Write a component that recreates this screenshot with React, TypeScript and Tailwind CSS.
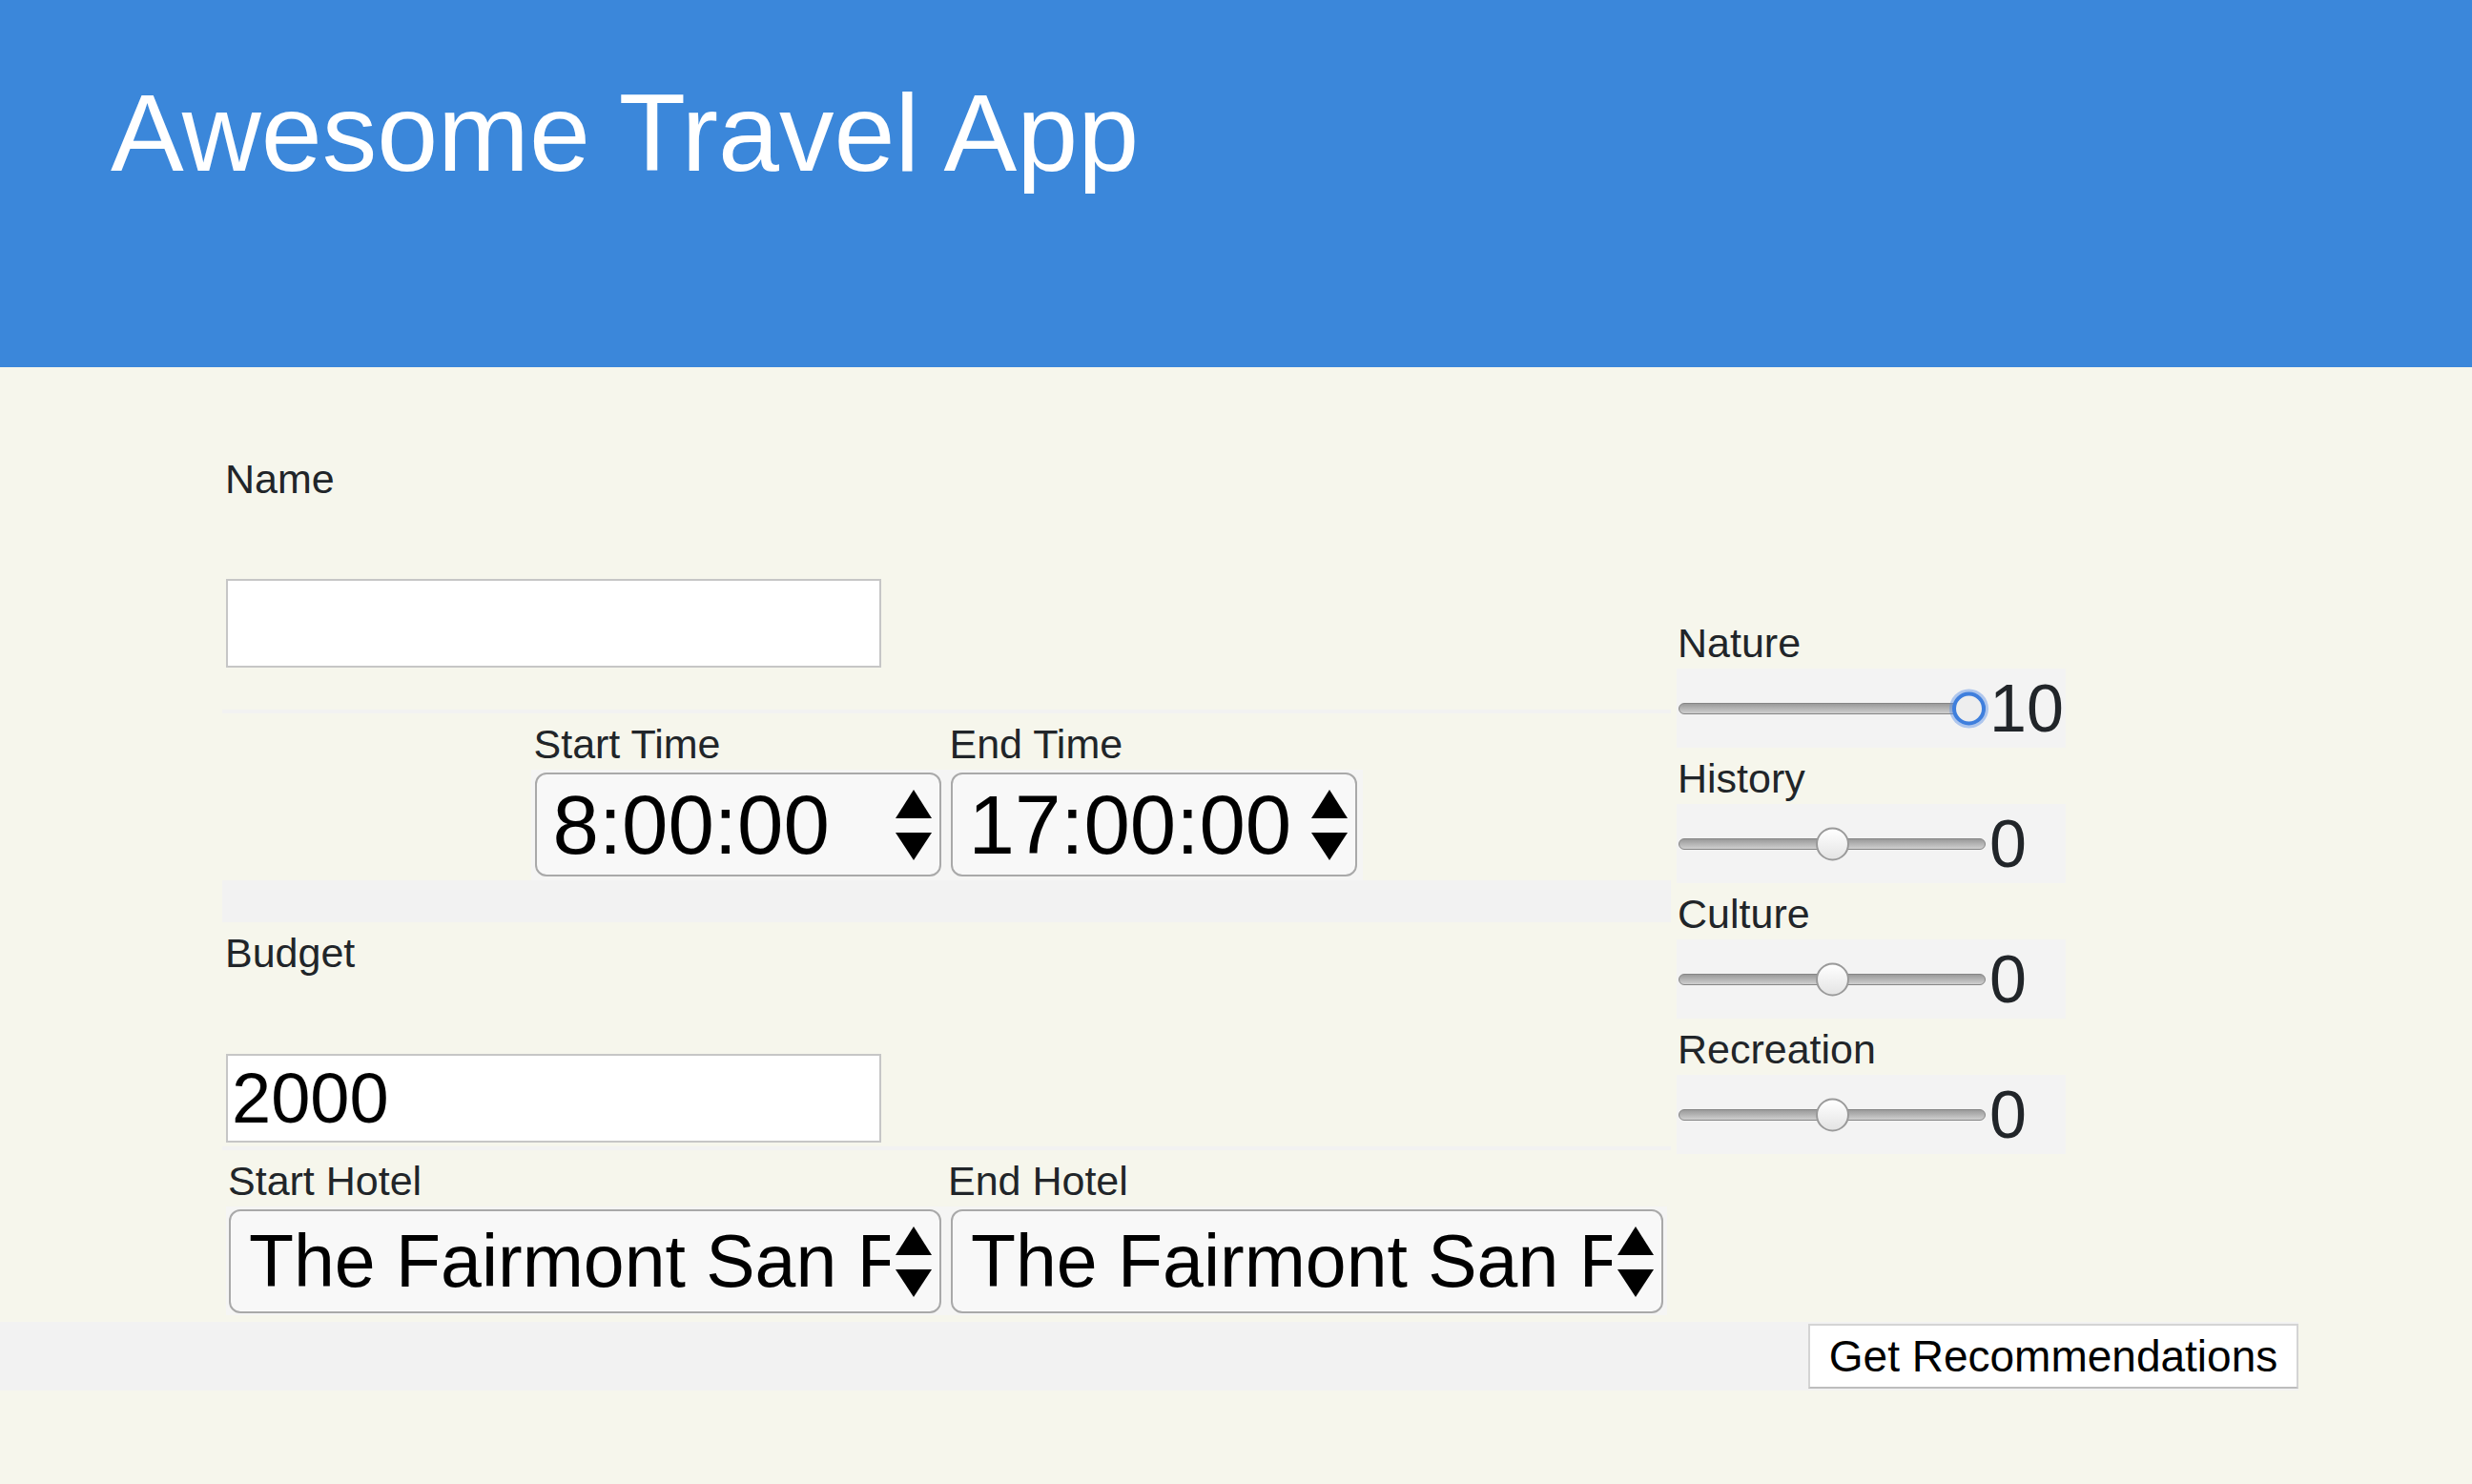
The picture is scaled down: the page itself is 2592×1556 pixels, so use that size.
import React from 'react';

type Slider = {
  label: string;
  value: number;
  focused?: boolean;
};

const sliders: Slider[] = [
  { label: 'Nature', value: 10, focused: true },
  { label: 'History', value: 0 },
  { label: 'Culture', value: 0 },
  { label: 'Recreation', value: 0 },
];

// slider range is -10..10, track 322px, thumb 35px
const thumbLeft = (value: number) => ((value + 10) / 20) * (322 - 35);

const SpinArrows = () => (
  <svg width="38" height="74" viewBox="0 0 38 74" aria-hidden="true" className="shrink-0">
    <polygon points="19,0 38,30 0,30" fill="#000" />
    <polygon points="0,45 38,45 19,74" fill="#000" />
  </svg>
);

const Label = ({ children, className = '' }: { children: React.ReactNode; className?: string }) => (
  <div className={`pt-[5px] text-[43px] leading-[54px] text-[#212529] ${className}`}>{children}</div>
);

const TimeBox = ({ value }: { value: string }) => (
  <div className="flex h-[109px] w-[426px] items-center rounded-[12px] border-2 border-[#a9a9a9] bg-[#f8f8f8] pl-[17px] pr-[8px]">
    <span className="flex-1 text-[87px] leading-none text-black">{value}</span>
    <SpinArrows />
  </div>
);

const HotelSelect = ({ value }: { value: string }) => (
  <div className="flex h-[109px] w-[747px] items-center rounded-[12px] border-2 border-[#a9a9a9] bg-[#f8f8f8] pl-[19px] pr-[8px]">
    <span className="w-[672px] overflow-hidden whitespace-nowrap text-[77px] leading-none text-black">
      {value}
    </span>
    <span className="ml-[6px] flex">
      <SpinArrows />
    </span>
  </div>
);

const SliderRow = ({ slider }: { slider: Slider }) => (
  <div>
    <Label className="pl-[1px]">{slider.label}</Label>
    <div className="flex h-[83px] items-center bg-[#f3f3f3] pl-[2px]">
      <div className="relative flex h-[46px] w-[322px] items-center">
        <div className="h-[12px] w-full rounded-full border border-[#858585] bg-linear-to-b from-[#9a9a9a] to-[#d0d0d0]" />
        {slider.focused ? (
          <div
            className="absolute top-1/2 h-[35px] w-[35px] -translate-y-1/2 rounded-full border-[4px] border-[#3f7fdd] bg-[#eeeeee] shadow-[0_0_0_3px_rgba(90,145,230,0.45)]"
            style={{ left: thumbLeft(slider.value) }}
          />
        ) : (
          <div
            className="absolute top-1/2 h-[35px] w-[35px] -translate-y-1/2 rounded-full border-2 border-[#9a9a9a] bg-linear-to-b from-white to-[#e4e4e4]"
            style={{ left: thumbLeft(slider.value) }}
          />
        )}
      </div>
      <span className="ml-[4px] text-[70px] leading-none text-[#212529]">{slider.value}</span>
    </div>
  </div>
);

export default function App() {
  return (
    <div className="min-h-screen bg-[#f6f6ec] font-['Liberation_Sans',Arial,sans-serif]">
      {/* ヘッダー */}
      <header className="h-[385px] bg-[#3b87da] pl-[116px] pt-[82px]">
        <h1 className="text-[115px] leading-none text-white">Awesome Travel App</h1>
      </header>

      <main className="flex items-start gap-[6px] pl-[233px] pt-[85px]">
        {/* フォーム */}
        <div className="w-[1519px]">
          <Label className="pl-[3px]">Name</Label>
          <input
            type="text"
            readOnly
            className="ml-[4px] mt-[78px] block h-[93px] w-[687px] border-2 border-[#c6c6c6] bg-white outline-none"
          />
          <div className="mt-[44px] h-[4px] bg-[#f2f2f2]" />

          <div className="mx-auto w-[872px]">
            <div className="flex">
              <Label className="w-[436px] pl-[3px]">Start Time</Label>
              <Label className="pl-[3px]">End Time</Label>
            </div>
            <div className="flex gap-[10px] bg-[#f5f5f4] pb-[4px] pl-[4px] pr-[6px] pt-[3px]">
              <TimeBox value="8:00:00" />
              <TimeBox value="17:00:00" />
            </div>
          </div>
          <div className="h-[44px] bg-[#f2f2f2]" />

          <Label className="pl-[3px]">Budget</Label>
          <input
            type="text"
            readOnly
            value="2000"
            className="ml-[4px] mt-[79px] block h-[93px] w-[687px] border-2 border-[#c6c6c6] bg-white pl-[4px] text-[74px] leading-none text-black outline-none"
          />
          <div className="mt-[4px] h-[4px] bg-[#f2f2f2]" />

          <div className="mx-auto w-[1511px]">
            <div className="flex">
              <Label className="w-[757px] pl-[2px]">Start Hotel</Label>
              <Label>End Hotel</Label>
            </div>
            <div className="flex gap-[10px] bg-[#f5f5f4] pb-[2px] pl-[3px] pt-[3px]">
              <HotelSelect value="The Fairmont San Francisco" />
              <HotelSelect value="The Fairmont San Francisco" />
            </div>
          </div>
        </div>

        {/* スライダー */}
        <div className="mt-[172px] w-[408px]">
          {sliders.map((s) => (
            <SliderRow key={s.label} slider={s} />
          ))}
        </div>
      </main>

      <div className="mt-[7px] flex h-[72px] w-[2410px] items-center justify-end bg-[#f2f2f2]">
        <button
          type="button"
          className="flex h-[68px] w-[514px] items-center justify-center border-2 border-[#d4d4d4] border-b-[#bdbdbd] bg-white text-[46px] leading-none text-black"
        >
          Get Recommendations
        </button>
      </div>
    </div>
  );
}
